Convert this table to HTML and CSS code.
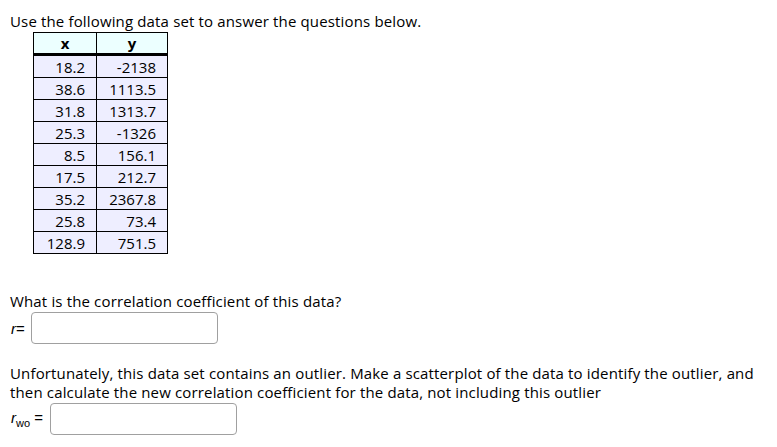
FILE: index.html
```html
<!DOCTYPE html>
<html>
<head>
<meta charset="utf-8">
<link rel="stylesheet" href="styles.css">
</head>
<body>
<div class="question">
  <p class="intro">Use the following data set to answer the questions below.</p>
  <table class="data">
    <thead>
      <tr><th>x</th><th>y</th></tr>
    </thead>
    <tbody>
      <tr><td>18.2</td><td>-2138</td></tr>
      <tr><td>38.6</td><td>1113.5</td></tr>
      <tr><td>31.8</td><td>1313.7</td></tr>
      <tr><td>25.3</td><td>-1326</td></tr>
      <tr><td>8.5</td><td>156.1</td></tr>
      <tr><td>17.5</td><td>212.7</td></tr>
      <tr><td>35.2</td><td>2367.8</td></tr>
      <tr><td>25.8</td><td>73.4</td></tr>
      <tr><td>128.9</td><td>751.5</td></tr>
    </tbody>
  </table>
  <p class="ask">What is the correlation coefficient of this data?</p>
  <div class="answer">
    <span class="math"><i>r</i>=</span>
    <input class="box" type="text">
  </div>
  <p class="para">Unfortunately, this data set contains an outlier. Make a scatterplot of the data to identify the outlier, and then calculate the new correlation coefficient for the data, not including this outlier</p>
  <div class="answer answer-wo">
    <span class="math"><i>r</i><sub>wo</sub> =</span>
    <input class="box" type="text">
  </div>
</div>
</body>
</html>
```
FILE: styles.css
```css
html, body {
  margin: 0;
  padding: 0;
  background: #fff;
}
body {
  font-family: "Open Sans", "Noto Sans", sans-serif;
  font-size: 15px;
  letter-spacing: 0.15px;
  color: #000;
}
.question {
  padding: 11px 10px 0 10px;
}
.intro {
  margin: 0;
  line-height: 21px;
}
.data {
  border-collapse: collapse;
  margin: 0 0 0 23px;
  font-family: "Open Sans", "Noto Sans", sans-serif;
  font-size: 15px;
  letter-spacing: 0;
}
.data th {
  background: #ecffff;
  border: 1px solid #000;
  border-bottom: 3px solid #000;
  height: 20px;
  line-height: 18px;
  padding: 0;
  font-weight: bold;
  text-align: center;
}
.data th:first-child { width: 62px; }
.data th:last-child { width: 70px; }
.data td {
  background: #eeeeff;
  border: 1px solid #000;
  height: 21px;
  line-height: 18px;
  padding: 0 11px 0 0;
  text-align: right;
}
.ask {
  margin: 37px 0 0 0;
  line-height: 20px;
}
.answer {
  display: flex;
  align-items: center;
  gap: 6px;
  margin-top: 1px;
}
.math {
  font-family: "Liberation Sans", Arial, sans-serif;
  font-size: 15px;
  letter-spacing: 0;
  padding-left: 1px;
}
.math sub {
  font-size: 11px;
  vertical-align: -4px;
}
.box {
  width: 187px;
  height: 32px;
  box-sizing: border-box;
  border: 1px solid #a0a0a0;
  border-radius: 4px;
  margin: 0;
  padding: 0;
}
.para {
  margin: 20px 0 0 0;
  line-height: 19px;
}
.answer-wo {
  margin-top: 1px;
  gap: 7px;
}
```
